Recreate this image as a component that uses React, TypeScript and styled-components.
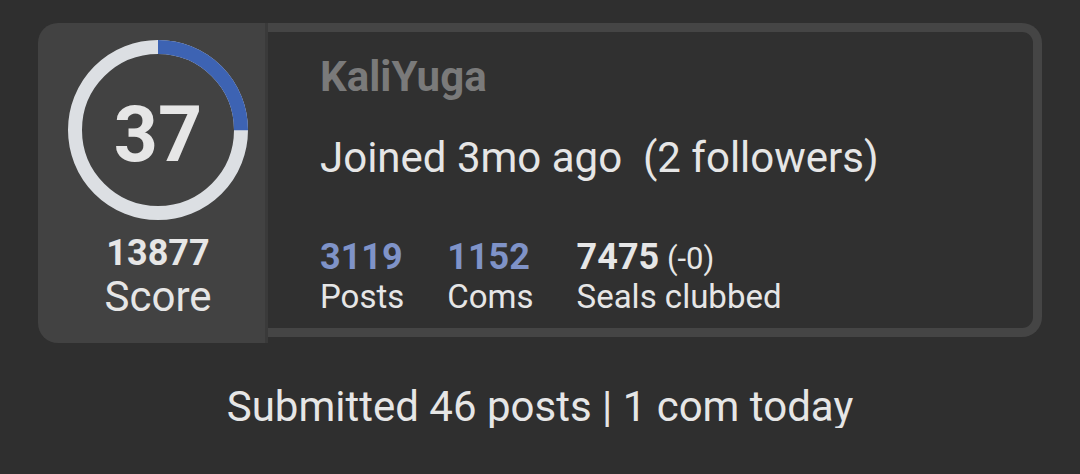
import styled, { createGlobalStyle } from 'styled-components'

const GlobalStyle = createGlobalStyle`
  body {
    margin: 0;
    background: #2f2f2f;
    font-family: Roboto, "Liberation Sans", sans-serif;
    color: #e6e6e6;
  }
`

const stats = [
  { value: '3119', label: 'Posts', accent: true },
  { value: '1152', label: 'Coms', accent: true },
  { value: '7475', extra: '(-0)', label: 'Seals clubbed', accent: false }
]

function ScoreRing ({ level, progress }: { level: number, progress: number }) {
  const r = 83
  const c = 2 * Math.PI * r
  return (
    <RingWrap>
      <svg width="180" height="180" viewBox="0 0 180 180">
        <circle cx="90" cy="90" r={r} fill="none" stroke="#dcdfe3" strokeWidth="14" />
        <circle
          cx="90" cy="90" r={r} fill="none" stroke="#3d63b3" strokeWidth="14"
          strokeDasharray={`${c * progress} ${c}`}
          transform="rotate(-90 90 90)"
        />
      </svg>
      <Level>{level}</Level>
    </RingWrap>
  )
}

function App () {
  return (
    <Page>
      <GlobalStyle />
      <Card>
        <ScorePanel>
          <ScoreRing level={37} progress={0.25} />
          <ScoreValue>13877</ScoreValue>
          <ScoreLabel>Score</ScoreLabel>
        </ScorePanel>
        <InfoPanel>
          <Name>KaliYuga</Name>
          <Joined>Joined 3mo ago{'\u00a0\u00a0'}(2 followers)</Joined>
          <StatRow>
            {stats.map(s => (
              <Stat key={s.label}>
                <StatValue $accent={s.accent}>
                  {s.value}
                  {s.extra && <StatExtra> {s.extra}</StatExtra>}
                </StatValue>
                <StatLabel>{s.label}</StatLabel>
              </Stat>
            ))}
          </StatRow>
        </InfoPanel>
      </Card>
      <Summary>Submitted 46 posts | 1 com today</Summary>
    </Page>
  )
}

const Page = styled.div`
  padding: 23px 38px 0;
`
const Card = styled.div`
  display: flex;
  align-items: flex-start;
  width: 1004px;
`
const ScorePanel = styled.div`
  width: 230px;
  height: 320px;
  box-sizing: border-box;
  padding: 17px 0 0 10px;
  background: #424242;
  border-radius: 20px 0 0 20px;
  display: flex;
  flex-direction: column;
  align-items: center;
  box-shadow: inset -3px 0 0 #3a3a3a;
`
const RingWrap = styled.div`
  display: grid;
  width: 180px;
  height: 180px;
  & > * {
    grid-area: 1 / 1;
  }
  svg {
    display: block;
  }
`
const Level = styled.div`
  align-self: center;
  justify-self: center;
  padding-top: 10px;
  font-size: 77px;
  font-weight: 700;
  line-height: 1;
  color: #e6e6e6;
`
const ScoreValue = styled.div`
  margin-top: 15px;
  font-size: 36px;
  font-weight: 700;
  line-height: 1;
  color: #e6e6e6;
`
const ScoreLabel = styled.div`
  margin-top: 5px;
  font-size: 42px;
  line-height: 1;
  color: #e6e6e6;
`
const InfoPanel = styled.div`
  flex: 1;
  height: 314px;
  box-sizing: border-box;
  background: #303030;
  border: 9px solid #454545;
  border-left: none;
  border-radius: 0 20px 20px 0;
  padding: 24px 0 0 52px;
`
const Name = styled.div`
  font-size: 42px;
  font-weight: 700;
  line-height: 1;
  color: #7a7a7a;
`
const Joined = styled.div`
  margin-top: 39px;
  font-size: 42px;
  line-height: 1;
  color: #e6e6e6;
`
const StatRow = styled.div`
  display: flex;
  gap: 43px;
  margin-top: 60px;
`
const Stat = styled.div`
  display: flex;
  flex-direction: column;
  gap: 5px;
`
const StatValue = styled.div<{ $accent: boolean }>`
  font-size: 36px;
  font-weight: 700;
  line-height: 1;
  color: ${p => p.$accent ? '#7f93c8' : '#e6e6e6'};
`
const StatExtra = styled.span`
  font-size: 31px;
  font-weight: 400;
`
const StatLabel = styled.div`
  font-size: 33px;
  line-height: 1;
  color: #e6e6e6;
`
const Summary = styled.div`
  margin-top: 43px;
  text-align: center;
  font-size: 42px;
  line-height: 1;
  color: #e6e6e6;
`

export default App
